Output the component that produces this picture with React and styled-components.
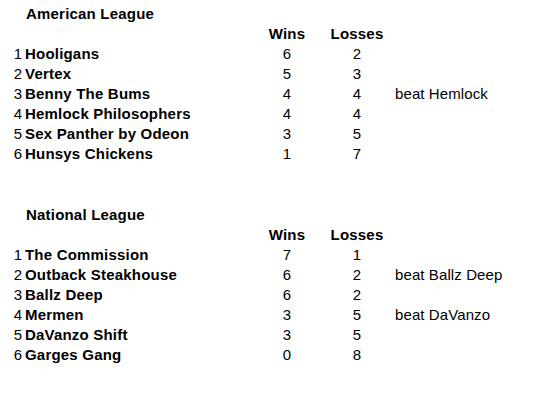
import React from "react";
import styled, { createGlobalStyle } from "styled-components";

const Global = createGlobalStyle`
  html, body { margin: 0; padding: 0; background: #ffffff; }
  body { font-family: Arial, "Liberation Sans", sans-serif; color: #000000; }
`;

const Page = styled.div`
  display: flex;
  flex-direction: column;
  gap: 41px;
  padding: 4px 0 0 1px;
  width: 557px;
`;

const League = styled.section`
  display: flex;
  flex-direction: column;
`;

const Row = styled.div`
  display: grid;
  grid-template-columns: 22px 229px 70px 70px 1fr;
  height: 20px;
  line-height: 20px;
  font-size: 15px;
  white-space: nowrap;
`;

const Rank = styled.span`
  text-align: right;
  padding-right: 1px;
`;

const Name = styled.span`
  padding-left: ${(p) => (p.$title ? 3 : 2)}px;
  font-weight: bold;
  letter-spacing: 0.2px;
`;

const Stat = styled.span`
  text-align: center;
  font-weight: ${(p) => (p.$head ? "bold" : "normal")};
  letter-spacing: ${(p) => (p.$head ? "0.2px" : "0")};
`;

const Note = styled.span`
  padding-left: 3px;
  letter-spacing: 0.1px;
`;

const leagues = [
  {
    title: "American League",
    teams: [
      ["Hooligans", 6, 2, ""],
      ["Vertex", 5, 3, ""],
      ["Benny The Bums", 4, 4, "beat Hemlock"],
      ["Hemlock Philosophers", 4, 4, ""],
      ["Sex Panther by Odeon", 3, 5, ""],
      ["Hunsys Chickens", 1, 7, ""],
    ],
  },
  {
    title: "National League",
    teams: [
      ["The Commission", 7, 1, ""],
      ["Outback Steakhouse", 6, 2, "beat Ballz Deep"],
      ["Ballz Deep", 6, 2, ""],
      ["Mermen", 3, 5, "beat DaVanzo"],
      ["DaVanzo Shift", 3, 5, ""],
      ["Garges Gang", 0, 8, ""],
    ],
  },
];

export default function App() {
  return (
    <>
      <Global />
      <Page>
        {leagues.map((lg) => (
          <League key={lg.title}>
            <Row>
              <Rank />
              <Name $title>{lg.title}</Name>
            </Row>
            <Row>
              <Rank />
              <Name />
              <Stat $head>Wins</Stat>
              <Stat $head>Losses</Stat>
            </Row>
            {lg.teams.map(([name, w, l, note], i) => (
              <Row key={name}>
                <Rank>{i + 1}</Rank>
                <Name>{name}</Name>
                <Stat>{w}</Stat>
                <Stat>{l}</Stat>
                <Note>{note}</Note>
              </Row>
            ))}
          </League>
        ))}
      </Page>
    </>
  );
}
